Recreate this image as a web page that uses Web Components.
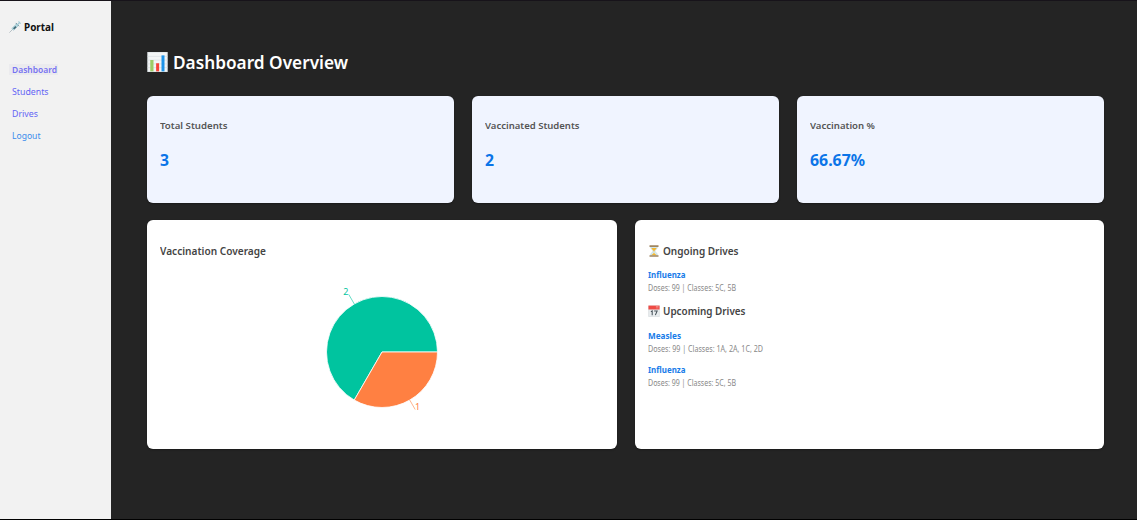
<!DOCTYPE html>
<html lang="en">
<head>
<meta charset="utf-8">
<title>Portal</title>
<style>
html, body { margin: 0; height: 100%; overflow: hidden; background: #242424; font-family: "Noto Sans", "Open Sans", sans-serif; }
</style>
</head>
<body>
<portal-app></portal-app>
<script>
const define = (name, html, ready) => {
  const t = document.createElement('template');
  t.innerHTML = html;
  customElements.define(name, class extends HTMLElement {
    constructor() {
      super();
      this.attachShadow({ mode: 'open' }).append(t.content.cloneNode(true));
    }
    connectedCallback() { if (ready) ready(this, this.shadowRoot); }
  });
};

/* One line of text, condensed or widened to the width given in "w". */
define('fit-text', `<style>
:host { display: block; white-space: nowrap; }
span { display: inline-block; transform-origin: 0 50%; }
</style><span><slot></slot></span>`, (el, root) => {
  const s = root.querySelector('span');
  const fit = () => {
    s.style.transform = 'none';
    const n = s.getBoundingClientRect().width;
    if (n) s.style.transform = `scaleX(${+el.getAttribute('w') / n})`;
  };
  fit();
  requestAnimationFrame(fit);
});

const ICONS = {
  syringe: `<path d="M.5 15.500 5 11" stroke="#9aa9b0" stroke-width=".9"/><path d="M3.600 10 10 3.800 12.400 6.200 6 12.400Z" fill="#b5dce3" stroke="#8bb6c2" stroke-width=".6"/><path d="M5.300 9.600 8.500 6.500 10.200 8.200 7 11.200Z" fill="#456b78"/><path d="M9 2.600 13.400 7" stroke="#71929e" stroke-width="1.300"/><path d="M11.200 4.900 14.200 2" stroke="#a5cdd8" stroke-width="1.800"/><path d="M12.600.600 15.600 3.600" stroke="#a5cdd8" stroke-width="1.500"/>`,
  chart: `<path d="M0 0H16V16H0Z" fill="#f3f5f6"/><path d="M0 3.500H16M0 6.500H16M0 9.500H16M0 12.500H16" stroke="#d5dcdf" stroke-width=".5"/><path d="M.2.200H15.800V15.800H.2Z" stroke="#d0d8dc" stroke-width=".5"/><path d="M2.200 6.400H4.800V15.500H2.200Z" fill="#9ccc65"/><path d="M6.900 9H9.300V15.500H6.900Z" fill="#f44336"/><path d="M11.200 2.700H13.600V15.500H11.200Z" fill="#1e93e8"/>`,
  hourglass: `<path d="M3.500 2.500H12.500C12.500 5.500 9.500 6.500 9.300 8 9.500 9.500 12.500 10.500 12.500 13.500H3.500C3.500 10.500 6.500 9.500 6.700 8 6.500 6.500 3.500 5.500 3.500 2.500Z" fill="#d7edf2" stroke="#a8c4c9" stroke-width=".5"/><path d="M4.600 4H11.400C10.700 5.800 8.900 6.500 8.200 8.500V10.500L11.500 13.500H4.500L7.800 10.500V8.500C7 6.500 5.300 5.800 4.600 4Z" fill="#f6b72e"/><path d="M2 .3H14V2.500H2ZM2 13.500H14V15.700H2Z" fill="#a08560"/>`,
  calendar: `<path d="M.8 1H15.200V15.500H.8Z" fill="#e9edef" stroke="#c1c9cd" stroke-width=".5"/><path d="M.6.800H15.400V6H.6Z" fill="#ef4b45"/><path d="M10.500 2H14M10.500 3.800H14" stroke="#f9aaa5" stroke-width=".8"/><path d="M3.800 8.800 5.600 7.800V13.500M8.200 8H12.200L9.800 13.500" stroke="#48545b" stroke-width="1.400"/>`
};
define('emoji-icon', `<style>
:host { display: block; flex: none; width: 12px; height: 12px; }
svg { display: block; width: 100%; height: 100%; }
</style><svg viewBox="0 0 16 16" fill="none" aria-hidden="true"></svg>`,
  (el, root) => { root.querySelector('svg').innerHTML = ICONS[el.getAttribute('name')]; });

define('nav-item', `<style>
:host { display: block; height: 22.200px; font-size: 9.400px; color: #6465f5; }
:host([active]) { font-weight: 600; color: #7672f2; }
div { margin-left: 9px; padding-left: 2.600px; width: 46px; height: 11px; line-height: 11px; }
:host([active]) div { background: #ebebee; }
</style><div><slot></slot></div>`);

define('side-bar', `<style>
:host { display: block; box-sizing: border-box; background: #f2f2f2; padding-top: 19px; }
header { display: flex; gap: 2.700px; padding-left: 9.300px; align-items: center; height: 14px; font-size: 10.700px; line-height: 14px; font-weight: 700; color: #111; }
nav { padding-top: 29.500px; }
</style>
<header><emoji-icon name="syringe"></emoji-icon><fit-text w="30">Portal</fit-text></header>
<nav>
<nav-item active><fit-text w="45">Dashboard</fit-text></nav-item>
<nav-item><fit-text w="36.500">Students</fit-text></nav-item>
<nav-item><fit-text w="26">Drives</fit-text></nav-item>
<nav-item style="color:#3b8cec"><fit-text w="28.500">Logout</fit-text></nav-item>
</nav>`);

define('stat-card', `<style>
:host { display: block; box-sizing: border-box; height: 107px; padding: 22.500px 13.100px 0; background: #f0f4ff; border-radius: 6px; box-shadow: 0 1px 2px rgba(0,0,0,.3); }
.label { font-size: 9.600px; line-height: 14px; font-weight: 600; color: #555; }
.value { font-size: 15.200px; line-height: 20px; font-weight: 700; color: #0b74e8; margin-top: 17.500px; }
</style><div class="label"><slot name="label"></slot></div><div class="value"><slot></slot></div>`);

define('panel-card', `<style>
:host { display: block; box-sizing: border-box; height: 229px; padding: 24px 13px 0; background: #fff; border-radius: 6px; box-shadow: 0 1px 2px rgba(0,0,0,.3); }
</style><slot></slot>`);

define('panel-heading', `<style>
:host { display: flex; gap: 3.300px; align-items: center; height: 14px; font-size: 10.700px; line-height: 14px; font-weight: 600; color: #444; }
</style><slot></slot>`);

define('drive-item', `<style>
:host { display: block; height: 34.200px; }
.name { font-size: 9.200px; line-height: 14px; font-weight: 700; color: #187ce9; }
.info { font-size: 8.200px; line-height: 12px; color: #888; }
</style><div class="name"><slot name="name"></slot></div><div class="info"><slot></slot></div>`);

define('pie-chart', `<style>
:host { display: block; width: 140px; margin: 20px auto 0; }
svg { display: block; overflow: visible; }
text { font: 9px "Noto Sans", sans-serif; }
</style>
<svg width="140" height="140" viewBox="0 0 140 140">
<path d="M70 74H125.500A55.500 55.500 0 1 0 42.250 122.060Z" fill="#00c49f" stroke="#fff" stroke-width=".8"/>
<path d="M70 74H125.500A55.500 55.500 0 0 1 42.250 122.060Z" fill="#ff8042" stroke="#fff" stroke-width=".8"/>
<path d="M42.250 25.940 36.800 16.500" stroke="#00c49f" fill="none" stroke-width=".6"/>
<path d="M97.750 122.060 103.200 131.500" stroke="#ff8042" fill="none" stroke-width=".6"/>
<text x="36.500" y="17" text-anchor="end" fill="#00c49f">2</text>
<text x="103" y="132" fill="#ff8042">1</text>
</svg>`);

define('portal-app', `<style>
:host { display: grid; grid-template-columns: 111px 1fr; box-sizing: border-box; height: 100vh; border-top: 1px solid #17131a; border-bottom: 1px solid #000; background: #242424; }
main { padding: 49px 33px 0 36px; }
h1 { display: flex; align-items: center; gap: 5.300px; margin: 0; height: 24px; font-size: 17.600px; line-height: 24px; font-weight: 600; color: #fff; }
h1 emoji-icon { width: 21px; height: 20px; }
.stats { display: grid; grid-template-columns: repeat(3, 1fr); gap: 18px; margin-top: 22px; }
.panels { display: grid; grid-template-columns: 1fr 1fr; gap: 18px; margin-top: 17px; }
.list { padding: 10px 0 0 .5px; }
.late { padding: 11px 0 0 .5px; }
</style>
<side-bar></side-bar>
<main>
<h1><emoji-icon name="chart"></emoji-icon><fit-text w="175">Dashboard Overview</fit-text></h1>
<section class="stats">
<stat-card><fit-text slot="label" w="67.500">Total Students</fit-text><fit-text w="9">3</fit-text></stat-card>
<stat-card><fit-text slot="label" w="94.500">Vaccinated Students</fit-text><fit-text w="9">2</fit-text></stat-card>
<stat-card><fit-text slot="label" w="65">Vaccination %</fit-text><fit-text w="55">66.67%</fit-text></stat-card>
</section>
<section class="panels">
<panel-card>
<panel-heading><fit-text w="106">Vaccination Coverage</fit-text></panel-heading>
<pie-chart></pie-chart>
</panel-card>
<panel-card>
<panel-heading><emoji-icon name="hourglass"></emoji-icon><fit-text w="75.500">Ongoing Drives</fit-text></panel-heading>
<div class="list"><drive-item style="height:36px"><fit-text slot="name" w="37.500">Influenza</fit-text><fit-text w="88">Doses: 99 | Classes: 5C, 5B</fit-text></drive-item></div>
<panel-heading><emoji-icon name="calendar"></emoji-icon><fit-text w="82.500">Upcoming Drives</fit-text></panel-heading>
<div class="late">
<drive-item><fit-text slot="name" w="33">Measles</fit-text><fit-text w="115">Doses: 99 | Classes: 1A, 2A, 1C, 2D</fit-text></drive-item>
<drive-item><fit-text slot="name" w="37.500">Influenza</fit-text><fit-text w="88">Doses: 99 | Classes: 5C, 5B</fit-text></drive-item>
</div>
</panel-card>
</section>
</main>`);
</script>
</body>
</html>
